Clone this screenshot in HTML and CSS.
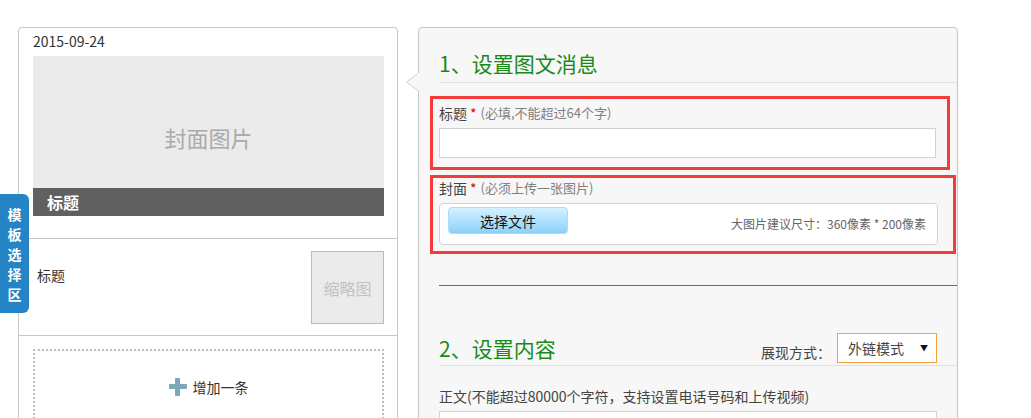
FILE: index.html
```html
<!DOCTYPE html>
<html lang="zh-CN">
<head>
    <meta charset="UTF-8">
    <meta name="viewport" content="width=device-width, initial-scale=1.0">
    <title>图文消息编辑</title>
    <link rel="stylesheet" href="styles.css">
</head>
<body>
    <div class="tpl-tab">模<br>板<br>选<br>择<br>区</div>

    <div class="container">
        <!-- left: preview -->
        <div class="preview">
            <div class="preview-main">
                <div class="preview-date">2015-09-24</div>
                <div class="cover">
                    <div class="cover-img">封面图片</div>
                    <div class="cover-title">标题</div>
                </div>
            </div>

            <div class="preview-item">
                <div class="item-title">标题</div>
                <div class="thumb">缩略图</div>
            </div>

            <div class="preview-add">
                <div class="add-box">
                    <span class="plus"></span>增加一条
                </div>
            </div>
        </div>

        <!-- right: editor -->
        <div class="editor">
            <div class="section-head">
                <h2 class="section-title">1、设置图文消息</h2>
            </div>

            <div class="field field-title">
                <div class="field-label">标题<span class="req">*</span><span class="hint">(必填,不能超过64个字)</span></div>
                <input type="text" class="text-input">
            </div>

            <div class="field field-cover">
                <div class="field-label">封面<span class="req">*</span><span class="hint">(必须上传一张图片)</span></div>
                <div class="upload-box">
                    <button class="btn-file">选择文件</button>
                    <span class="upload-tip">大图片建议尺寸：360像素 * 200像素</span>
                </div>
            </div>

            <div class="divider"></div>

            <div class="section-head section-head-2">
                <h2 class="section-title">2、设置内容</h2>
                <div class="mode">
                    <span class="mode-label">展现方式：</span>
                    <div class="select">
                        <span>外链模式</span>
                        <span class="caret">▼</span>
                    </div>
                </div>
            </div>

            <div class="body-label">正文(不能超过80000个字符，支持设置电话号码和上传视频)</div>
            <div class="body-box"></div>
        </div>
    </div>
</body>
</html>
```

FILE: styles.css
```css
:root {
    --border-color: #c6c6c6;
    --panel-background: #f7f7f7;
    --green-color: #178a17;
    --red-color: #f43b3b;
    --blue-color: #2484c6;
    --text-color: #444;
    --muted-color: #808080;
}

* {
    margin: 0;
    padding: 0;
    box-sizing: border-box;
    font-family: "Noto Sans CJK SC", "Liberation Sans", sans-serif;
}

body {
    background-color: #ffffff;
    color: var(--text-color);
    font-size: 14px;
    line-height: 20px;
    overflow: hidden;
}

.container {
    display: flex;
    align-items: flex-start;
    gap: 20px;
    padding: 27px 0 0 18px;
}

/* side tab */
.tpl-tab {
    position: absolute;
    left: 0;
    top: 194px;
    width: 29px;
    height: 119px;
    padding-top: 10px;
    background-color: var(--blue-color);
    border-radius: 0 6px 6px 0;
    color: #ffffff;
    font-size: 14px;
    font-weight: 700;
    line-height: 20px;
    text-align: center;
    z-index: 2;
}

/* preview */
.preview {
    width: 380px;
    height: 420px;
    background-color: #ffffff;
    border: 1px solid var(--border-color);
    border-radius: 4px 4px 0 0;
}

.preview-main {
    padding: 3px 13px 22px 14px;
}

.preview-date {
    color: #333;
    font-size: 14px;
    line-height: 20px;
    margin-bottom: 5px;
}

.cover {
    display: flex;
    flex-direction: column;
    height: 160px;
    background-color: #ebebeb;
}

.cover-img {
    flex: 1;
    display: flex;
    align-items: center;
    justify-content: center;
    padding-top: 30px;
    color: #aaa;
    font-size: 22px;
}

.cover-title {
    height: 28px;
    padding-left: 14px;
    background-color: #606060;
    color: #ffffff;
    font-size: 16px;
    font-weight: 700;
    line-height: 28px;
}

.preview-item {
    display: flex;
    justify-content: space-between;
    padding: 12px 13px 11px 18px;
    border-top: 1px solid var(--border-color);
}

.item-title {
    margin-top: 14px;
    color: #333;
    font-size: 14px;
}

.thumb {
    width: 73px;
    height: 73px;
    display: flex;
    align-items: center;
    justify-content: center;
    background-color: #ebebeb;
    border: 1px solid #bbb;
    color: #c2c2c2;
    font-size: 16px;
}

.preview-add {
    padding: 13px 13px 0 14px;
    border-top: 1px solid var(--border-color);
}

.add-box {
    height: 90px;
    padding-top: 26px;
    border: 2px dotted #bdbdbd;
    text-align: center;
    color: #333;
    font-size: 14px;
}

.plus {
    display: inline-block;
    position: relative;
    width: 18px;
    height: 18px;
    margin-right: 6px;
    vertical-align: -3px;
}

.plus::before,
.plus::after {
    content: "";
    position: absolute;
    background-color: #7ea7bd;
    border-radius: 1px;
}

.plus::before {
    left: 0;
    top: 6px;
    width: 18px;
    height: 5px;
}

.plus::after {
    left: 6px;
    top: 0;
    width: 5px;
    height: 18px;
}

/* editor */
.editor {
    position: relative;
    width: 540px;
    height: 420px;
    background-color: var(--panel-background);
    border: 1px solid var(--border-color);
    border-radius: 4px 4px 0 0;
}

.editor::before,
.editor::after {
    content: "";
    position: absolute;
    top: 44px;
    border-style: solid;
    border-color: transparent;
}

.editor::before {
    left: -13px;
    border-width: 10px 13px 10px 0;
    border-right-color: var(--border-color);
}

.editor::after {
    left: -12px;
    border-width: 10px 13px 10px 0;
    border-right-color: var(--panel-background);
}

.section-head {
    display: flex;
    align-items: center;
    justify-content: space-between;
    margin-left: 20px;
    padding: 20px 0 4px;
    border-bottom: 1px solid #e2e2e2;
}

.section-title {
    color: var(--green-color);
    font-size: 21px;
    font-weight: 400;
    line-height: 30px;
}

.field {
    border: 3px solid var(--red-color);
}

.field-title {
    margin: 13px 7px 0 11px;
    padding: 4px 11px 9px 6px;
}

.field-cover {
    margin: 5px 1px 0 11px;
    padding: 0 15px 6px 6px;
}

.field-label {
    display: flex;
    align-items: center;
    height: 20px;
    margin-bottom: 5px;
    font-size: 14px;
    line-height: 20px;
}

.req {
    color: #e00000;
    margin: 0 4px 0 3px;
}

.hint {
    color: var(--muted-color);
    font-size: 13px;
}

.text-input {
    display: block;
    width: 100%;
    height: 30px;
    border: 1px solid #d2d2d2;
    background-color: #ffffff;
    outline: none;
}

.upload-box {
    display: flex;
    align-items: flex-start;
    justify-content: space-between;
    height: 42px;
    padding: 3px 11px 0 8px;
    background-color: #ffffff;
    border: 1px solid #d2d2d2;
    border-radius: 4px;
}

.btn-file {
    width: 120px;
    height: 27px;
    background: linear-gradient(#d4f1ff, #8cd1fa);
    border: 1px solid #a9dcf6;
    border-radius: 4px;
    color: #111;
    font-size: 14px;
    line-height: 24px;
}

.upload-tip {
    margin-top: 7px;
    color: #666;
    font-size: 12px;
    line-height: 20px;
}

.divider {
    margin: 31px 0 0 20px;
    border-top: 1px solid #2b7bbf;
}

.section-head-2 {
    margin-top: 47px;
    padding: 0 20px 2px 0;
}

.mode {
    display: flex;
    align-items: center;
}

.mode-label {
    margin-right: 6px;
    margin-top: 7px;
    color: #444;
    font-size: 14px;
}

.select {
    display: flex;
    align-items: center;
    justify-content: space-between;
    width: 100px;
    height: 30px;
    padding: 0 8px 0 10px;
    background-color: #ffffff;
    border: 1px solid #f0a040;
    color: #444;
    font-size: 14px;
}

.caret {
    color: #111;
    font-size: 8px;
}

.body-label {
    margin: 20px 0 5px 20px;
    color: #444;
    font-size: 14px;
    line-height: 20px;
}

.body-box {
    height: 40px;
    margin: 0 20px 0 20px;
    background-color: #ffffff;
    border: 1px solid #d2d2d2;
}
```
